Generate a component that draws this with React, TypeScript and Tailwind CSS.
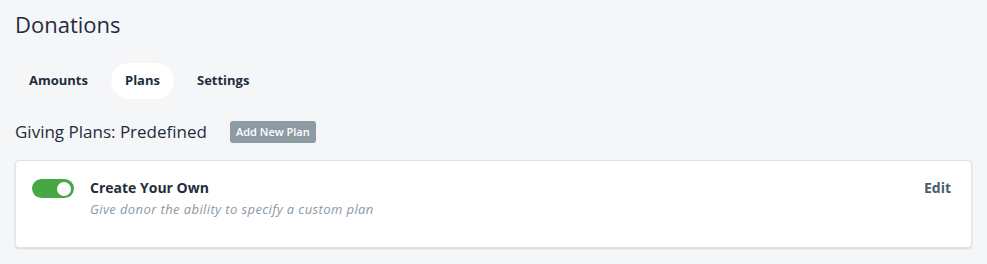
import { useState } from "react";

const tabs = ["Amounts", "Plans", "Settings"];

const App: React.FC = () => {
    const [active, setActive] = useState("Plans");
    const [enabled, setEnabled] = useState(true);

    return (
        <div className="min-h-screen bg-[#f5f6f8] px-[15px] pt-[9px] text-[#1f2d3d] font-['Open_Sans',sans-serif]">
            <h1 className="text-[22px] leading-[30px]">Donations</h1>

            {/* tabs */}
            <div className="mt-[24px] flex items-center gap-[9px]">
                {tabs.map((tab) => (
                    <button
                        key={tab}
                        onClick={() => setActive(tab)}
                        className={`h-[36px] rounded-full px-[14px] text-[13px] font-bold ${
                            active === tab ? "bg-white" : ""
                        }`}
                    >
                        {tab}
                    </button>
                ))}
            </div>

            {/* plans header */}
            <div className="mt-[22px] flex items-center gap-[23px]">
                <h2 className="text-[17px] leading-[22px]">Giving Plans: Predefined</h2>
                <button className="h-[22px] rounded-[3px] bg-[#8d9ba5] px-[6px] text-[11px] font-semibold text-white">
                    Add New Plan
                </button>
            </div>

            {/* plan card */}
            <div className="mt-[17px] flex h-[88px] items-start rounded-[4px] border border-[#dfe2e6] bg-white pl-[16px] pr-[20px] pt-[17px] shadow-[0_1px_2px_rgba(0,0,0,0.12)]">
                <button
                    onClick={() => setEnabled(!enabled)}
                    className={`mt-[1px] flex h-[19px] w-[42px] shrink-0 items-center rounded-full px-[3px] ${
                        enabled ? "justify-end bg-[#47a843]" : "justify-start bg-[#c9d0d6]"
                    }`}
                >
                    <span className="h-[14px] w-[14px] rounded-full bg-white" />
                </button>
                <div className="ml-[16px] flex-1">
                    <div className="text-[14px] font-bold leading-[20px]">Create Your Own</div>
                    <div className="mt-[2px] text-[13px] italic leading-[18px] tracking-[0.4px] text-[#8a99a6]">
                        Give donor the ability to specify a custom plan
                    </div>
                </div>
                <button className="text-[14px] font-bold leading-[20px] text-[#475e6e]">Edit</button>
            </div>
        </div>
    );
};

export default App;
